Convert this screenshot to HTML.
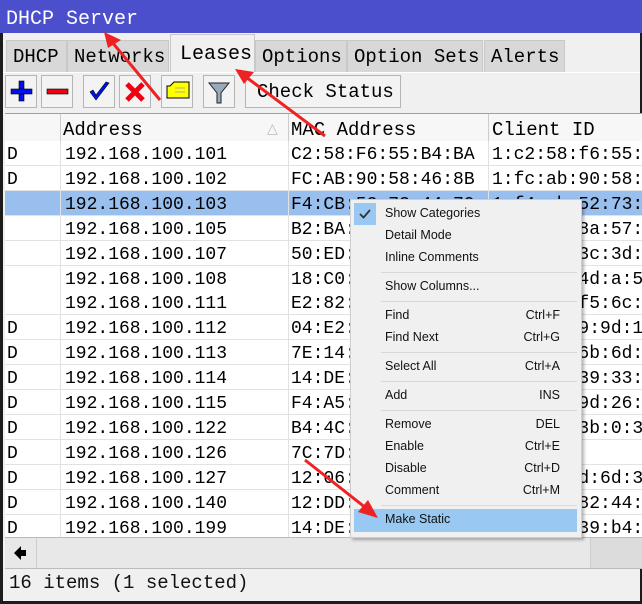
<!DOCTYPE html>
<html><head><meta charset="utf-8"><style>
body{margin:0;width:642px;height:604px;overflow:hidden;background:#f0f0f0;position:relative;font-family:"Liberation Mono",monospace;}
.a{position:absolute;white-space:pre;}
.t{font-size:18px;color:#111;}
.tab{position:absolute;top:40px;height:32px;background:#d8d8d8;border:1px solid #c8c8c8;border-bottom:none;font-size:19px;line-height:33px;padding-left:6px;box-sizing:border-box;}
.btn{position:absolute;top:75px;width:32px;height:33px;border:1px solid #b5b5b5;background:#f3f3f3;box-sizing:border-box;}
.row{position:absolute;left:5px;width:637px;height:24px;border-bottom:1px solid #e2e2e2;background:#fff;font-size:18px;line-height:25px;white-space:pre;}
.row span{position:absolute;top:2px;}
.menu{position:absolute;left:350px;top:199px;width:230px;height:337px;background:#f0f0f0;border:1px solid #cfcfcf;box-shadow:2px 2px 3px rgba(0,0,0,.3);font-family:"Liberation Sans","DejaVu Sans",sans-serif;font-size:12.5px;color:#111;}
.mi{position:absolute;left:34px;}
.sc{position:absolute;right:21px;}
.sep{position:absolute;left:30px;width:196px;border-top:1px solid #d8d8d8;}
</style></head><body>
<div class="a" style="left:0;top:0;width:642px;height:33px;background:#4b4fcb;"></div>
<div class="a" style="left:6px;top:8px;color:#fff;font-size:20px;">DHCP Server</div>
<div style="position:absolute;left:0;top:33px;width:642px;height:571px;border-left:3px solid #1c1c1c;border-right:2px solid #1c1c1c;border-bottom:3px solid #1c1c1c;box-sizing:border-box;"></div>

<div class="tab" style="left:6px;width:61px;">DHCP</div>
<div class="tab" style="left:67px;width:102px;">Networks</div>
<div class="tab" style="left:170px;top:34px;height:39px;width:85px;background:#f0f0f0;line-height:40px;padding-left:9px;font-size:20px;">Leases</div>
<div class="tab" style="left:255px;width:92px;">Options</div>
<div class="tab" style="left:347px;width:136px;">Option Sets</div>
<div class="tab" style="left:484px;width:81px;">Alerts</div>
<div class="a" style="left:3px;top:72px;width:637px;border-top:1px solid #fff;"></div>

<div class="btn" style="left:5px;"><svg width="30" height="31"><rect x="13" y="5" width="5" height="20" fill="#0010f0" stroke="#000" stroke-width=".6"/><rect x="5" y="13" width="21" height="5" fill="#0010f0" stroke="#000" stroke-width=".6"/></svg></div>
<div class="btn" style="left:41px;"><svg width="30" height="31"><rect x="5" y="13" width="21" height="5" fill="#f00010" stroke="#000" stroke-width=".6"/></svg></div>
<div class="btn" style="left:83px;"><svg width="30" height="31"><path d="M6 16 L12 24 L25 7 L22 6 L12 19 L9 14 Z" fill="#0010f0" stroke="#000" stroke-width=".6"/></svg></div>
<div class="btn" style="left:119px;"><svg width="30" height="31"><path d="M7 8 L23 24 M23 8 L7 24" stroke="#f00010" stroke-width="5"/></svg></div>
<div class="btn" style="left:161px;"><svg width="30" height="31"><path d="M8 10 L12 6 L27 6 L27 22 L5 22 L5 10 Z" fill="#ffff00" stroke="#000"/><path d="M13 12h10M13 16h10" stroke="#999" stroke-width=".7"/></svg></div>
<div class="btn" style="left:203px;"><svg width="30" height="31"><path d="M5 7 L25 7 L17 17 L17 27 L13 27 L13 17 Z" fill="#9ab" stroke="#222"/></svg></div>
<div class="btn" style="left:245px;width:156px;font-size:19px;line-height:33px;padding-left:11px;">Check Status</div>

<div class="a" style="left:5px;top:113px;width:637px;height:424px;background:#fff;border-top:1px solid #a0a0a0;"></div>
<div class="row" style="top:114px;height:27px;background:#f7f7f7;border-bottom:1px solid #ccc;font-size:19px;line-height:28px;">
<span style="left:0;top:0;width:55px;height:27px;border-right:1px solid #ccc"></span>
<span style="left:58px;">Address</span><span style="left:262px;color:#bbb;font-size:14px">△</span>
<span style="left:283px;top:0;height:27px;border-left:1px solid #ccc"></span><span style="left:286px;">MAC Address</span>
<span style="left:483px;top:0;height:27px;border-left:1px solid #ccc"></span><span style="left:487px;">Client ID</span>
</div>
<div id="rows"></div>
<script>
var d=[["D","192.168.100.101","C2:58:F6:55:B4:BA","1:c2:58:f6:55:"],["D","192.168.100.102","FC:AB:90:58:46:8B","1:fc:ab:90:58:"],["","192.168.100.103","F4:CB:52:73:44:79","1:f4:cb:52:73:"],["","192.168.100.105","B2:BA:8A:57:1C:2E","1:b2:ba:8a:57:"],["","192.168.100.107","50:ED:3C:3D:9A:11","1:50:ed:3c:3d:"],["","192.168.100.108","18:C0:4D:0A:52:6F","1:18:c0:4d:a:5"],["","192.168.100.111","E2:82:F5:6C:21:0B","1:e2:82:f5:6c:"],["D","192.168.100.112","04:E2:09:9D:1A:33","1:04:e2:9:9d:1"],["D","192.168.100.113","7E:14:6B:6D:08:77","1:7e:14:6b:6d:"],["D","192.168.100.114","14:DE:39:33:0C:5A","1:14:de:39:33:"],["D","192.168.100.115","F4:A5:9D:26:71:4E","1:f4:a5:9d:26:"],["D","192.168.100.122","B4:4C:3B:00:3E:19","1:b4:4c:3b:0:3"],["D","192.168.100.126","7C:7D:11:22:33:44",""],["D","192.168.100.127","12:06:0D:6D:3A:80","1:12:06:d:6d:3"],["D","192.168.100.140","12:DD:82:44:5C:0E","1:12:dd:82:44:"],["D","192.168.100.199","14:DE:39:B4:2F:8A","1:14:de:39:b4:"]];
var h="";for(var i=0;i<16;i++){var y=141+i*24.9;var sel=i==2;
h+='<div class="row" style="top:'+y+'px;'+(sel?'background:#99bfee;':'')+'"><span style="left:0;top:0;width:55px;height:25px;border-right:1px solid #e2e2e2"></span><span style="left:2px">'+d[i][0]+'</span><span style="left:60px">'+d[i][1]+'</span><span style="left:283px;top:0;height:25px;border-left:1px solid #e2e2e2"></span><span style="left:286px">'+d[i][2]+'</span><span style="left:483px;top:0;height:25px;border-left:1px solid #e2e2e2"></span><span style="left:487px">'+d[i][3]+'</span></div>';}
document.getElementById("rows").innerHTML=h;
</script>
<div class="a" style="left:5px;top:537px;width:637px;height:30px;background:#e8e8e8;border-top:1px solid #bbb;border-bottom:1px solid #bbb;"></div>
<div class="a" style="left:5px;top:538px;width:31px;height:30px;border-right:1px solid #ccc;"><svg width="30" height="30"><path d="M9 15 L16 8 L16 12 L21 12 L21 18 L16 18 L16 22 Z" fill="#000"/></svg></div>
<div class="a" style="left:590px;top:538px;width:52px;height:30px;background:#dcdcdc;border-left:1px solid #ccc;"></div>
<div class="a t" style="left:9px;top:572px;font-size:19px;">16 items (1 selected)</div>

<div class="menu">
<div class="a" style="left:3px;top:3px;width:22px;height:22px;background:#99c9f3;"></div>
<svg class="a" style="left:7px;top:8px" width="14" height="12"><path d="M2 6 L5.5 9.5 L12 2" stroke="#333" stroke-width="1.8" fill="none"/></svg>
<div class="mi" style="top:6px">Show Categories</div>
<div class="mi" style="top:28px">Detail Mode</div>
<div class="mi" style="top:50px">Inline Comments</div>
<div class="sep" style="top:72px"></div>
<div class="mi" style="top:79px">Show Columns...</div>
<div class="sep" style="top:101px"></div>
<div class="mi" style="top:108px">Find</div><div class="sc" style="top:108px">Ctrl+F</div>
<div class="mi" style="top:130px">Find Next</div><div class="sc" style="top:130px">Ctrl+G</div>
<div class="sep" style="top:152px"></div>
<div class="mi" style="top:159px">Select All</div><div class="sc" style="top:159px">Ctrl+A</div>
<div class="sep" style="top:181px"></div>
<div class="mi" style="top:188px">Add</div><div class="sc" style="top:188px">INS</div>
<div class="sep" style="top:210px"></div>
<div class="mi" style="top:217px">Remove</div><div class="sc" style="top:217px">DEL</div>
<div class="mi" style="top:239px">Enable</div><div class="sc" style="top:239px">Ctrl+E</div>
<div class="mi" style="top:261px">Disable</div><div class="sc" style="top:261px">Ctrl+D</div>
<div class="mi" style="top:283px">Comment</div><div class="sc" style="top:283px">Ctrl+M</div>
<div class="sep" style="top:305px"></div>
<div class="a" style="left:3px;top:309px;width:223px;height:23px;background:#99c9f3;"></div>
<div class="mi" style="top:312px">Make Static</div>
</div>

<svg class="a" style="left:0;top:0" width="642" height="604">
<g stroke="#ee2222" stroke-width="3" fill="#ee2222">
<line x1="160" y1="100" x2="112" y2="42"/><path d="M104 32 L121 40 L108 48 Z" stroke="none"/>
<line x1="325" y1="136" x2="246" y2="77"/><path d="M235 69 L254 72 L244 84 Z" stroke="none"/>
<line x1="305" y1="460" x2="366" y2="508"/><path d="M378 518 L358 512 L368 500 Z" stroke="none"/>
</g></svg>
</body></html>
